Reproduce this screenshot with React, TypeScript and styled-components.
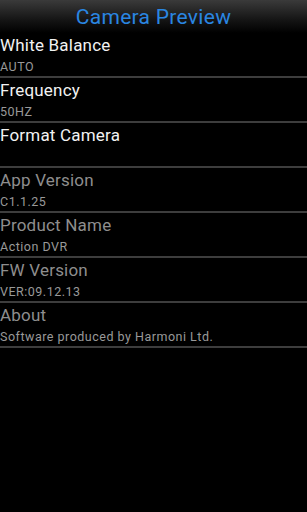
import styled, { createGlobalStyle } from "styled-components";

interface Setting {
  title: string;
  value: string;
  enabled: boolean;
}

const settings: Setting[] = [
  { title: "White Balance", value: "AUTO", enabled: true },
  { title: "Frequency", value: "50HZ", enabled: true },
  { title: "Format Camera", value: "", enabled: true },
  { title: "App Version", value: "C1.1.25", enabled: false },
  { title: "Product Name", value: "Action DVR", enabled: false },
  { title: "FW Version", value: "VER:09.12.13", enabled: false },
  { title: "About", value: "Software produced by Harmoni Ltd.", enabled: false },
];

const App = () => {
  return (
    <Screen>
      <GlobalStyle />
      <Header>
        <HeaderTitle>Camera Preview</HeaderTitle>
      </Header>
      <List>
        {settings.map((item) => (
          <Row key={item.title}>
            <RowTitle $enabled={item.enabled}>{item.title}</RowTitle>
            <RowValue>{item.value}</RowValue>
          </Row>
        ))}
      </List>
    </Screen>
  );
};

const GlobalStyle = createGlobalStyle`
  html, body {
    margin: 0;
    padding: 0;
    background: #000;
  }
  * {
    box-sizing: border-box;
  }
`;

const Screen = styled.main`
  width: 307px;
  height: 512px;
  background: #000;
  font-family: Roboto, "Noto Sans", sans-serif;
  overflow: hidden;
`;

// top bar
const Header = styled.header`
  height: 33px;
  padding-top: 1px;
  background: linear-gradient(to bottom, #3a3a3a 0%, #151515 60%, #000 100%);
  text-align: center;
`;

const HeaderTitle = styled.h1`
  margin: 0;
  font-size: 21px;
  font-weight: 400;
  line-height: 32px;
  letter-spacing: 0.3px;
  color: #2a86e2;
`;

// preference list
const List = styled.section`
  display: flex;
  flex-direction: column;
`;

const Row = styled.div`
  height: 45px;
  padding-top: 2px;
  border-bottom: 2px solid #3d3d3d;
  display: flex;
  flex-direction: column;
`;

const RowTitle = styled.div<{ $enabled: boolean }>`
  font-size: 17px;
  line-height: 20px;
  letter-spacing: 0.2px;
  color: ${(p) => (p.$enabled ? "#f2f2f2" : "#8e8e8e")};
  white-space: nowrap;
`;

const RowValue = styled.div`
  margin-top: 4px;
  height: 16px;
  font-size: 12.5px;
  line-height: 16px;
  letter-spacing: 0.5px;
  color: #999;
  white-space: nowrap;
`;

export default App;
